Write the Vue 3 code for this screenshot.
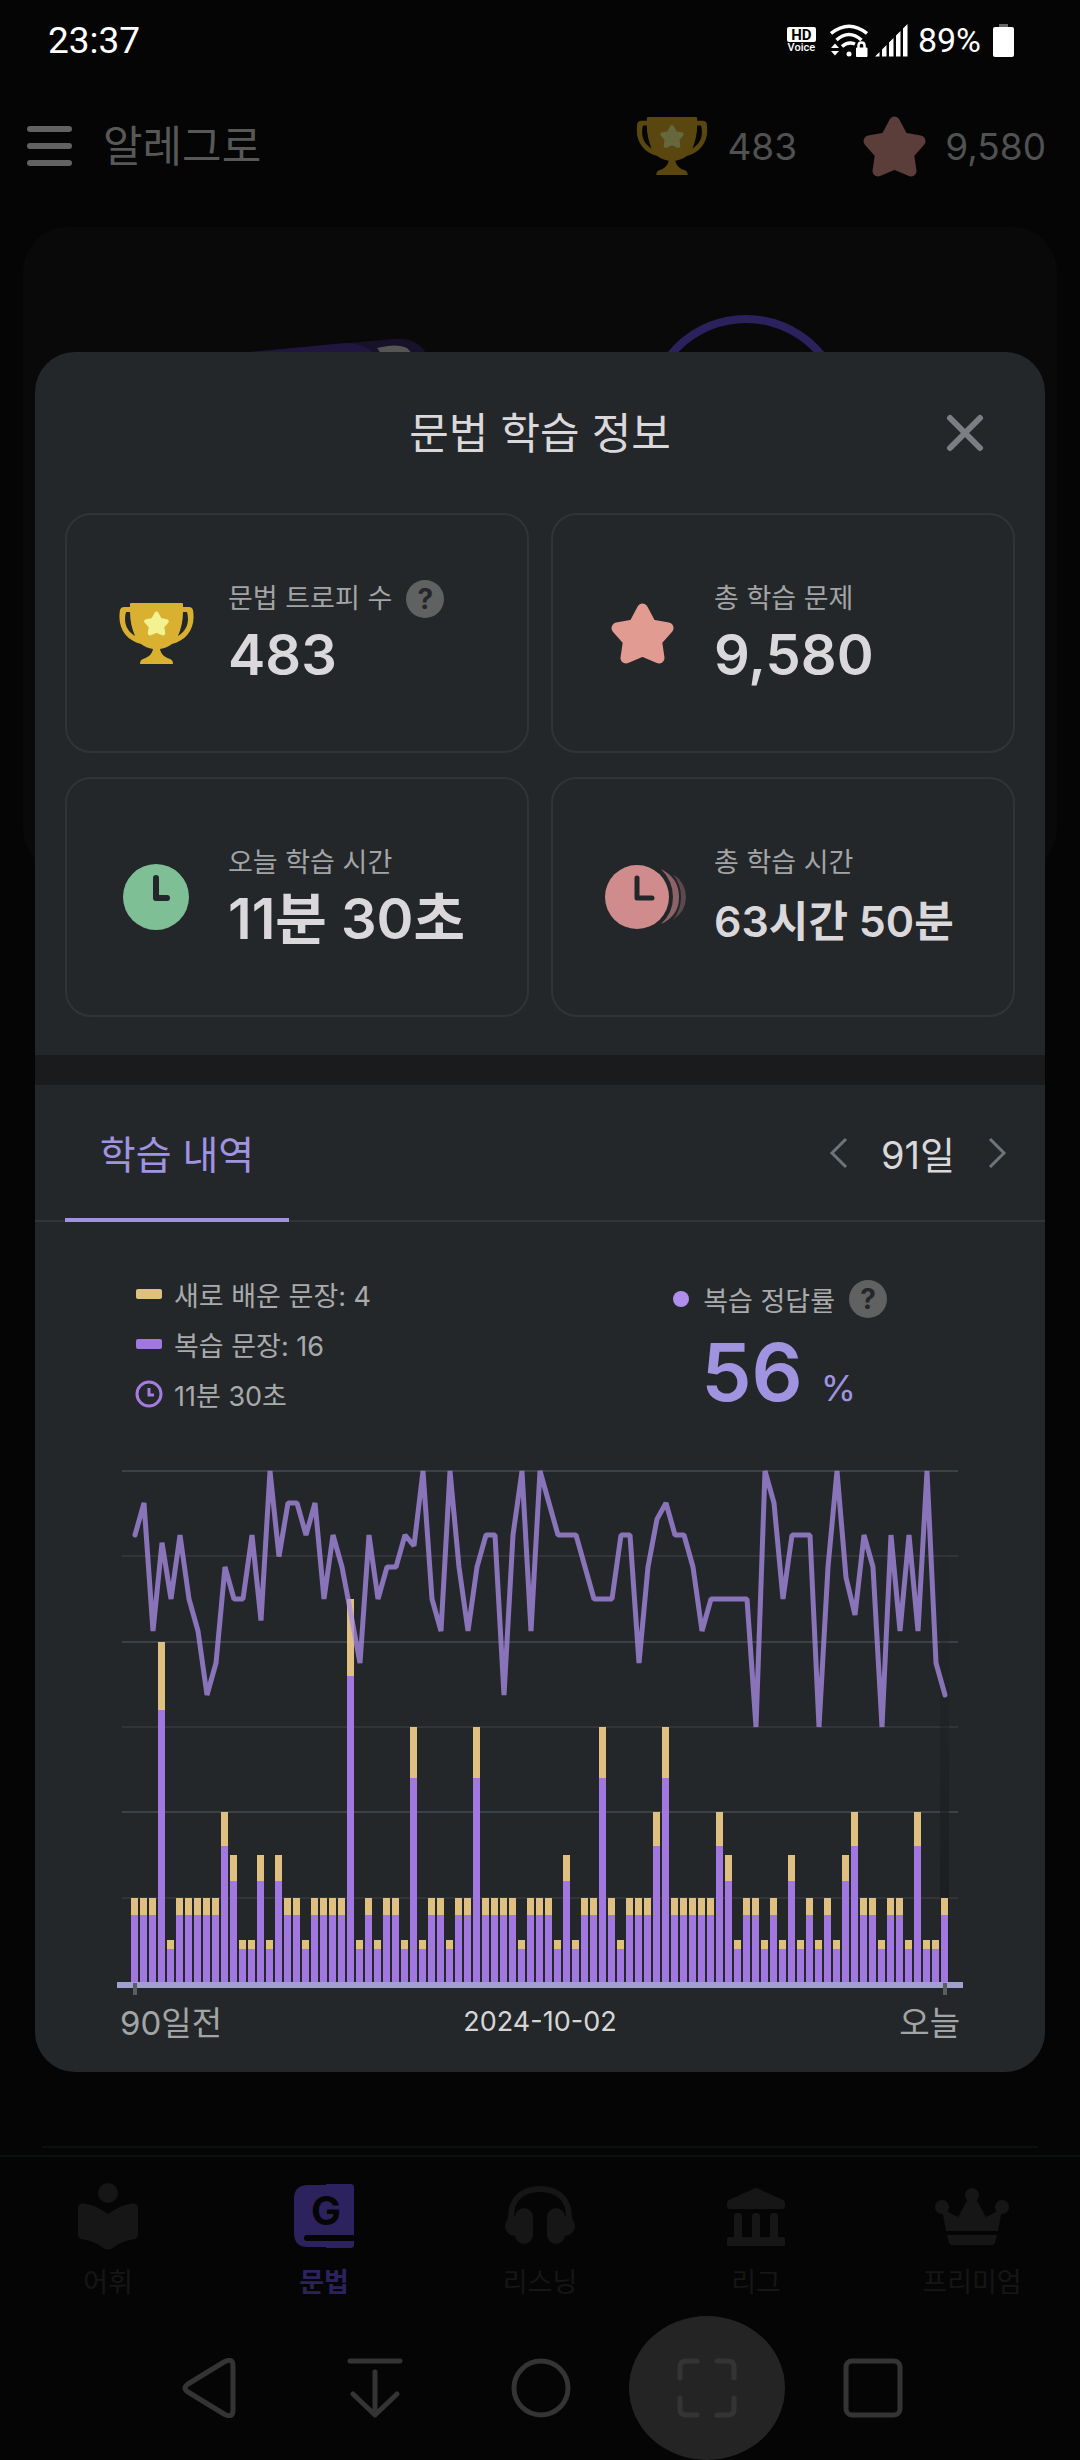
<script setup>
import { ref, computed } from 'vue'

const totals = [
  20, 20, 20, 80, 10, 20, 20, 20, 20, 20, 40, 30, 10, 10, 30, 10, 30, 20, 20, 10,
  20, 20, 20, 20, 90, 10, 20, 10, 20, 20, 10, 60, 10, 20, 20, 10, 20, 20, 60, 20,
  20, 20, 20, 10, 20, 20, 20, 10, 30, 10, 20, 20, 60, 20, 10, 20, 20, 20, 40, 60,
  20, 20, 20, 20, 20, 40, 30, 10, 20, 20, 10, 20, 10, 30, 10, 20, 10, 20, 10, 30,
  40, 20, 20, 10, 20, 20, 10, 40, 10, 10, 20
]
const accuracy = [
  87.5, 93.75, 68.75, 86, 75, 87.5, 75, 68.75, 56.25, 62.5, 81.25, 75, 75, 87.5, 70.8,
  100, 83.3, 93.75, 93.75, 87.5, 93.75, 75, 87.5, 81.25, 72, 62.5, 87.5, 75, 81.25, 81.25,
  87.5, 85.4, 100, 75, 68.75, 100, 81.25, 68.75, 81.25, 87.5, 87.5, 56.25, 87.5, 100, 68.75,
  100, 93.75, 87.5, 87.5, 87.5, 81.25, 75, 75, 75, 87.5, 87.5, 62.5, 81.25, 90.6, 93.75,
  87.5, 87.5, 81.25, 68.75, 75, 75, 75, 75, 75, 50, 100, 93.75, 75, 87.5, 87.5,
  87.5, 50, 81.25, 100, 79.2, 71.9, 87.5, 81.25, 50, 87.5, 68.75, 87.5, 68.75, 100, 62.5, 56.25
]

const BASE = 513
const PER_SENTENCE = 4.267
const bars = computed(() =>
  totals.map((total, i) => {
    const full = Math.round(total * PER_SENTENCE)
    const review = Math.round(total * 0.8 * PER_SENTENCE)
    return { x: 14 + i * 9, full, review }
  })
)
const linePoints = computed(() =>
  accuracy.map((p, i) => `${18 + i * 9},${(1 + (100 - p) * 5.12).toFixed(1)}`).join(' ')
)
const gridLines = [0, 85, 171, 256, 341, 427]

const stats = [
  { icon: 'trophy', label: '문법 트로피 수', value: '483', help: true },
  { icon: 'star', label: '총 학습 문제', value: '9,580' },
  { icon: 'clock', label: '오늘 학습 시간', value: '11분 30초' },
  { icon: 'clocks', label: '총 학습 시간', value: '63시간 50분', small: true }
]
const tabs = ['어휘', '문법', '리스닝', '리그', '프리미엄']
const activeTab = ref(1)
const days = ref(91)
</script>

<template>
  <div class="screen" lang="ko">
    <svg class="defs" width="0" height="0" aria-hidden="true">
      <symbol id="star" viewBox="0 0 63 61">
        <path d="M31.5 6 40 22 57 25 45.5 38 48 55 31.5 48 15 55 17.5 38 6 25 23 22Z" fill="currentColor" stroke="currentColor" stroke-width="11" stroke-linejoin="round" />
      </symbol>
      <symbol id="trophy" viewBox="0 0 75 61">
        <path fill="currentColor" fill-rule="evenodd" d="M12 0H63Q64 0 64 1V4H70Q73 4 74 7C77 25 68 37 53 41Q48 45 41 46C42 51 45 54 51 56Q54 57 54 61H21Q21 57 24 56C30 54 33 51 34 46Q27 45 22 41C7 37-2 25 1 7Q2 4 5 4H11V1Q11 0 12 0ZM7 9C4 20 8 28 16 33C13 26 11 18 11 9ZM68 9H64C64 18 62 26 59 33C67 28 71 20 68 9Z" />
      </symbol>
    </svg>

    <div class="status">
      <span class="clock">23:37</span>
      <div class="status-right">
        <div class="hd"><span class="hd-box">HD</span><span class="hd-voice">Voice</span></div>
        <svg width="38" height="33" viewBox="0 0 38 33" aria-label="Wi-Fi">
          <g fill="none" stroke="#fff" stroke-width="3.500">
            <path d="M1 9.500Q19-5 37 9.500" /><path d="M6.500 16Q19 5 31.500 16" /><path d="M12 22.500Q18 17 25 20" />
          </g>
          <circle cx="19" cy="30" r="2.500" fill="#fff" />
          <path d="M1 24 5 19.500 9 24ZM1 27H9L5 31.500Z" fill="#fff" />
          <path d="M26.500 24H37V32.500H26.500Z" fill="#fff" stroke="#fff" /><path d="M28.500 24V21.500Q28.500 18.500 31.500 18.500T34.500 21.500V24" fill="none" stroke="#fff" stroke-width="2.500" />
        </svg>
        <svg width="33" height="33" viewBox="0 0 33 33" aria-label="신호">
          <path fill="#fff" d="M0 32.500 4.500 28V32.500ZM7 25.500 11.500 21V32.500H7ZM14 18.500 18.500 14V32.500H14ZM21 11.500 25.500 7V32.500H21ZM28 4.500 32.500 0V32.500H28Z" />
        </svg>
        <span class="pct">89%</span>
        <svg width="21" height="33" viewBox="0 0 21 33" aria-label="배터리"><rect x="6" width="9" height="4" fill="#666" /><rect y="3" width="21" height="30" rx="2" fill="#fff" /></svg>
      </div>
    </div>

    <header class="topbar">
      <button class="menu" aria-label="메뉴"><i></i><i></i><i></i></button>
      <span class="app-name">알레그로</span>
      <span class="score">
        <svg class="dim-trophy" width="72" height="58" viewBox="0 0 75 61"><use href="#trophy" width="75" height="61" /><use class="inner" href="#star" x="25" y="8" width="25" height="25" /></svg>
        483
      </span>
      <span class="score">
        <svg class="dim-star" width="63" height="61"><use href="#star" /></svg>
        9,580
      </span>
    </header>

    <section class="hero">
      <svg viewBox="0 0 1034 200" aria-hidden="true">
        <path d="M218 126 370 112Q396 109 405 130V140H218Z" fill="#171129" />
        <path d="M218 126 322 116Q345 116 355 132V140H218Z" fill="#1f1740" />
        <path d="M354 121Q374 116 384 121L394 132H362Z" fill="#555" />
        <circle cx="723" cy="189" r="97" fill="none" stroke="#2b215c" stroke-width="8" />
      </svg>
    </section>
    <div class="grow"></div>
    <hr class="rule" />

    <nav class="tabbar">
      <button v-for="(t, i) in tabs" :key="t" :class="{ on: i === activeTab }" @click="activeTab = i">
        <svg v-if="i === 0" width="60" height="67" viewBox="0 0 60 67" fill="currentColor"><circle cx="30" cy="10" r="10" /><path d="M0 25Q0 21 4 20.500Q15 20 30 31Q45 20 56 20.500Q60 21 60 25V51Q60 55 57 56Q44 58 36 64Q30 69 24 64Q16 58 3 56Q0 55 0 51Z" /></svg>
        <svg v-else-if="i === 1" width="60" height="67" viewBox="0 0 60 67" fill="currentColor"><path d="M14 2H32V1H58L60 3V52H13Q10 52 10 55T13 58H60V63L58 65H32V64H14Q0 64 0 50V16Q0 2 14 2Z" /><text x="32" y="42" text-anchor="middle" class="g">G</text></svg>
        <svg v-else-if="i === 2" width="70" height="67" viewBox="0 0 70 67" fill="currentColor"><path d="M6 44V34C6 15 18 6 35 6S64 15 64 34V44" fill="none" stroke="currentColor" stroke-width="6" /><rect x="10" y="25" width="18" height="36" rx="9" /><rect x="42" y="25" width="18" height="36" rx="9" /><circle cx="10" cy="43" r="10" /><circle cx="60" cy="43" r="10" /></svg>
        <svg v-else-if="i === 3" width="58" height="67" viewBox="0 0 58 67" fill="currentColor"><path d="M26 6Q29 4 32 6L56 17Q58 18 58 20V23Q58 26 55 26H3Q0 26 0 23V20Q0 18 2 17ZM7 33Q7 30 11 30T15 33V54H7ZM25 33Q25 30 29 30T33 33V54H25ZM43 33Q43 30 47 30T51 33V54H43ZM2 54H56Q58 54 58 56V63H0V56Q0 54 2 54Z" /></svg>
        <svg v-else width="74" height="67" viewBox="0 0 74 67" fill="currentColor"><circle cx="37" cy="12" r="7" /><circle cx="7" cy="24" r="7" /><circle cx="67" cy="24" r="7" /><path d="M7 26 23 34 34 14H40L51 34 67 26 63 48H11ZM12 52H62L60 60Q59 62 57 62H17Q15 62 14 60Z" /></svg>
        <span>{{ t }}</span>
      </button>
    </nav>

    <div class="sysnav">
      <button aria-label="뒤로"><svg width="60" height="60" viewBox="0 0 60 60"><path d="M9 26 45 4Q54-1 54 8V52Q54 61 45 56L9 34Q3 30 9 26Z" /></svg></button>
      <button aria-label="내리기"><svg width="60" height="60" viewBox="0 0 60 60"><path d="M5 3H55M30 14V57M8 36 30 57 52 36" /></svg></button>
      <button aria-label="홈"><svg width="60" height="60" viewBox="0 0 60 60"><circle cx="30" cy="30" r="27" /></svg></button>
      <button class="pressed" aria-label="전체 화면"><svg width="60" height="60" viewBox="0 0 60 60"><path d="M3 20V9Q3 3 9 3H20M40 3H51Q57 3 57 9V20M57 40V51Q57 57 51 57H40M20 57H9Q3 57 3 51V40" /></svg></button>
      <button aria-label="최근 앱"><svg width="60" height="60" viewBox="0 0 60 60"><rect x="3" y="3" width="54" height="54" rx="6" /></svg></button>
    </div>

    <section class="modal" role="dialog" aria-labelledby="dlg-title">
      <header class="modal-head">
        <h1 id="dlg-title">문법 학습 정보</h1>
        <button class="close" aria-label="닫기"><svg width="38" height="38" viewBox="0 0 38 38"><path d="M4 4 34 34M34 4 4 34" stroke="#7b7f83" stroke-width="6" stroke-linecap="round" /></svg></button>
      </header>

      <div class="cards">
        <article v-for="s in stats" :key="s.label" class="card">
          <div class="card-icon">
            <svg v-if="s.icon === 'trophy'" class="trophy" width="75" height="61" viewBox="0 0 75 61"><use href="#trophy" /><use class="inner" href="#star" x="25" y="8" width="25" height="25" /></svg>
            <svg v-else-if="s.icon === 'star'" class="star" width="63" height="61"><use href="#star" /></svg>
            <svg v-else-if="s.icon === 'clock'" width="66" height="66" viewBox="0 0 66 66"><circle cx="33" cy="33" r="33" fill="#7fbf96" /><path d="M33 14V34H44" fill="none" stroke="#24272a" stroke-width="6" stroke-linecap="round" stroke-linejoin="round" /></svg>
            <svg v-else width="90" height="66" viewBox="0 0 90 66">
              <path d="M76 10Q89 19 89 33T76 56Q84 46 84 33T76 10Z" fill="#5d484c" />
              <path d="M64 5Q82 14 82 33T64 60Q76 49 76 33T64 5Z" fill="#8c6367" />
              <circle cx="40" cy="33" r="32" fill="#d08c8d" /><path d="M40 14V34H55" fill="none" stroke="#24272a" stroke-width="5" stroke-linecap="round" stroke-linejoin="round" />
            </svg>
          </div>
          <div class="card-text">
            <div class="label">{{ s.label }}<button v-if="s.help" class="help" aria-label="도움말">?</button></div>
            <strong :class="{ small: s.small }">{{ s.value }}</strong>
          </div>
        </article>
      </div>

      <div class="band"></div>

      <div class="history-head">
        <button class="history-tab">학습 내역</button>
        <div class="range">
          <button aria-label="이전" @click="days--"><svg width="20" height="32" viewBox="0 0 20 32"><path d="M17 2 3 16 17 30" /></svg></button>
          <span>{{ days }}일</span>
          <button aria-label="다음" @click="days++"><svg width="20" height="32" viewBox="0 0 20 32"><path d="M3 2 17 16 3 30" /></svg></button>
        </div>
      </div>

      <div class="summary">
        <ul class="legend">
          <li><i class="swatch fresh"></i>새로 배운 문장: 4</li>
          <li><i class="swatch review"></i>복습 문장: 16</li>
          <li><svg width="28" height="28" viewBox="0 0 28 28" fill="none"><circle cx="14" cy="14" r="12" stroke="#a57be0" stroke-width="3" /><path d="M14 8V15H19" stroke="#a57be0" stroke-width="3" /></svg>11분 30초</li>
        </ul>
        <div class="rate">
          <div class="rate-label"><i class="dot"></i>복습 정답률<button class="help" aria-label="도움말">?</button></div>
          <div class="rate-value">56<small>%</small></div>
        </div>
      </div>

      <div class="chart">
        <svg viewBox="0 0 846 525" role="img" aria-label="최근 91일 학습 내역">
          <defs>
            <linearGradient id="today" x1="0" y1="0" x2="0" y2="1"><stop offset="0" stop-color="#1c1c1f" stop-opacity="0" /><stop offset="1" stop-color="#1c1c1f" /></linearGradient>
          </defs>
          <rect v-for="(y, i) in gridLines" :key="y" x="5" :y="y" width="836" height="2" :fill="i % 2 ? '#323437' : '#3c4145'" />
          <rect x="823" y="62" width="9" height="450" fill="url(#today)" />
          <g v-for="b in bars" :key="b.x">
            <rect :x="b.x" :y="BASE - b.full" width="7" :height="b.full - b.review" fill="#dfc080" />
            <rect :x="b.x" :y="BASE - b.review" width="7" :height="b.review" fill="#a078df" />
          </g>
          <polyline :points="linePoints" fill="none" stroke="#a98be6" stroke-opacity=".76" stroke-width="5" stroke-linejoin="bevel" stroke-linecap="round" />
          <rect y="512" width="846" height="6" fill="#a09fd0" />
          <path d="M16 513H20V525H16ZM826 513H830V525H826Z" fill="#5c5d60" />
        </svg>
        <div class="axis"><span>90일전</span><time>2024-10-02</time><span>오늘</span></div>
      </div>
    </section>
  </div>
</template>

<style>
body { background: #050505; }
</style>

<style scoped>
* { box-sizing: border-box; }
.screen {
  position: relative;
  display: flex;
  flex-direction: column;
  min-height: 100vh;
  background: #050505;
  font-family: Inter, "Noto Sans CJK KR", sans-serif;
  overflow: hidden;
}
.defs { position: absolute; }
svg { display: block; flex: none; }
button { font: inherit; color: inherit; background: none; border: 0; padding: 0; }

.status { display: flex; justify-content: space-between; align-items: center; height: 80px; padding: 0 66px 0 48px; color: #fff; font-family: Roboto, sans-serif; }
.clock { font-size: 37px; }
.status-right { display: flex; align-items: center; gap: 7px; }
.hd { display: flex; flex-direction: column; align-items: center; margin-right: 7px; font-size: 11px; line-height: 12px; font-weight: 500; }
.hd-box { width: 29px; height: 15px; border-radius: 2px; background: #fff; color: #000; font-size: 15px; line-height: 16px; font-weight: 700; text-align: center; }
.pct { margin: 0 5px 0 3px; font-size: 34px; }

.topbar { display: flex; align-items: center; height: 132px; padding: 0 34px 0 27px; color: #505151; }
.menu { display: flex; flex-direction: column; gap: 11px; width: 45px; }
.menu i { height: 6px; border-radius: 3px; background: #626262; }
.app-name { margin: 0 auto 0 31px; font-size: 43px; line-height: 50px; color: #585858; }
.score { display: flex; align-items: center; gap: 19px; margin-left: 66px; font-size: 37px; }
.dim-trophy { color: #5a4710; }
.dim-trophy .inner { color: #66673c; }
.dim-star { color: #5b3d39; }

.hero { margin: 15px 23px 0; height: 646px; border-radius: 45px; background: #0a090a; }
.grow { flex: 1; }
.rule { margin: 0 42px 7px; height: 2px; border: 0; background: #0b0f0f; }

.tabbar { display: grid; grid-template-columns: repeat(5, 1fr); height: 161px; padding-top: 26px; border-top: 2px solid #0b0f0f; color: #161616; }
.tabbar button { display: flex; flex-direction: column; align-items: center; gap: 13px; font-size: 27px; }
.tabbar span { line-height: 40px; height: 40px; }
.tabbar .on { color: #2c225d; font-weight: 700; }
.g { font-size: 40px; font-weight: 700; fill: #050505; }

.sysnav { display: grid; grid-template-columns: repeat(5, 1fr); align-items: center; height: 144px; padding: 0 124px 0 126px; }
.sysnav button { display: flex; justify-content: center; align-items: center; justify-self: center; }
.sysnav svg { fill: none; stroke: #343434; stroke-width: 5px; stroke-linecap: round; stroke-linejoin: round; }
.sysnav .pressed { width: 156px; height: 144px; border-radius: 50%; background: #242424; }

.modal { position: absolute; top: 352px; left: 35px; right: 35px; border-radius: 40px; background: #24272a; color: #dad8da; overflow: hidden; }
.modal-head { display: grid; grid-template-columns: 1fr auto 1fr; align-items: center; height: 161px; padding: 0 61px; }
.modal-head h1 { grid-column: 2; margin: 0; font-size: 43px; line-height: 50px; font-weight: 400; }
.close { justify-self: end; }

.cards { display: grid; grid-template-columns: 1fr 1fr; gap: 24px 22px; padding: 0 30px 38px; }
.card { display: flex; align-items: center; gap: 27px; height: 240px; padding-left: 44px; border: 2px solid #313337; border-radius: 26px; }
.card-icon { display: flex; justify-content: center; width: 90px; }
.trophy { color: #d9b02f; }
.trophy .inner { color: #f2f290; }
.star { color: #e29b91; }
.card-text { padding-top: 4px; white-space: nowrap; }
.label { display: flex; align-items: center; height: 40px; font-size: 27px; line-height: 40px; color: #a3a4a5; }
.help { width: 38px; height: 38px; margin-left: 14px; border-radius: 50%; background: #606161; color: #24272a; font-size: 28px; line-height: 38px; font-weight: 700; text-align: center; }
.card strong { display: block; height: 72px; font-size: 56px; line-height: 72px; font-weight: 600; }
.card strong.small { font-size: 43px; line-height: 76px; }

.band { height: 30px; background: #1a1b1d; }

.history-head { display: flex; justify-content: space-between; height: 137px; padding: 0 38px 0 30px; border-bottom: 2px solid #323438; }
.history-tab { height: 137px; width: 224px; border-bottom: 4px solid #a093e0; color: #a093e0; font-size: 39px; }
.range { display: flex; align-items: center; gap: 32px; font-size: 38px; }
.range path { fill: none; stroke: #6c757c; stroke-width: 3px; }

.summary { display: flex; justify-content: space-between; padding: 47px 158px 0 100px; color: #a9aaab; font-size: 27px; }
.legend { margin: 0; padding: 0; list-style: none; }
.legend li { display: flex; align-items: center; gap: 11px; height: 50px; }
.swatch { width: 26px; height: 10px; margin: 0 1px; border-radius: 2px; }
.fresh { background: #dfc080; }
.review { background: #a078df; }
.rate-label { display: flex; align-items: center; height: 60px; }
.dot { width: 16px; height: 16px; margin-right: 14px; border-radius: 50%; background: #b08fec; }
.rate-value { display: flex; align-items: baseline; gap: 18px; height: 86px; padding-left: 28px; color: #a093e0; font-size: 80px; line-height: 86px; font-weight: 600; }
.rate-value small { font-size: 36px; font-weight: 400; }

.chart { padding: 51px 82px 25px; }
.axis { display: grid; grid-template-columns: 1fr auto 1fr; align-items: center; height: 52px; padding: 0 3px; font-size: 33px; color: #a3a4a5; }
.axis time { font-size: 27px; color: #d6d6d6; }
.axis span:last-child { text-align: right; }
</style>
